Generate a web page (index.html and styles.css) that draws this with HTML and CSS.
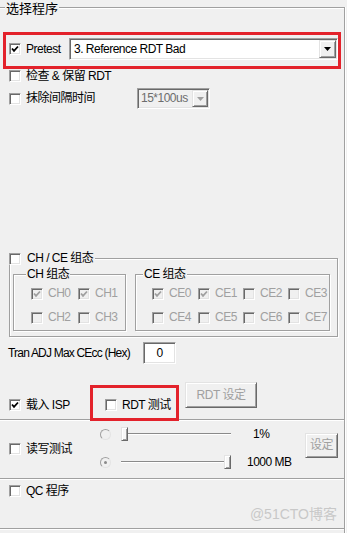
FILE: index.html
```html
<!DOCTYPE html>
<html lang="zh-CN">
<head>
<meta charset="utf-8">
<title>选择程序</title>
<link rel="stylesheet" href="styles.css">
</head>
<body>
<div class="page">
  <div class="frame">
    <div class="legend">选择程序</div>

    <div class="row row-pretest">
      <div class="chk w-pretest"><span class="box"><svg class="tick" viewBox="0 0 8 8"><polyline points="1,3.5 3,5.8 7,1.5"/></svg></span><span>Pretest</span></div>
      <div class="combo combo-main"><span class="combo-text">3. Reference RDT Bad</span><span class="combo-btn raised"><svg class="arrow" viewBox="0 0 7 4"><polygon points="0,0 7,0 3.5,4"/></svg></span></div>
    </div>

    <div class="row row-check">
      <div class="chk"><span class="box"></span><span>检查 &amp; 保留 RDT</span></div>
    </div>

    <div class="row row-erase">
      <div class="chk w-erase"><span class="box"></span><span>抹除间隔时间</span></div>
      <div class="combo combo-dis"><span class="combo-text">15*100us</span><span class="combo-btn raised"><svg class="arrow dis" viewBox="0 0 7 4"><polygon points="0,0 7,0 3.5,4"/></svg></span></div>
    </div>

    <div class="chce etched">
      <div class="chce-legend"><span class="box"></span><span>CH / CE 组态</span></div>
      <div class="chce-groups">
        <div class="sub sub-ch etched">
          <div class="sub-legend leg-ch">CH 组态</div>
          <div class="grid grid-ch">
            <div class="chk off"><span class="box dis"><svg class="tick" viewBox="0 0 8 8"><polyline points="1,3.5 3,5.8 7,1.5"/></svg></span><span>CH0</span></div>
            <div class="chk off"><span class="box dis"><svg class="tick" viewBox="0 0 8 8"><polyline points="1,3.5 3,5.8 7,1.5"/></svg></span><span>CH1</span></div>
            <div class="chk off"><span class="box dis"></span><span>CH2</span></div>
            <div class="chk off"><span class="box dis"></span><span>CH3</span></div>
          </div>
        </div>
        <div class="sub sub-ce etched">
          <div class="sub-legend leg-ce">CE 组态</div>
          <div class="grid grid-ce">
            <div class="chk off"><span class="box dis"><svg class="tick" viewBox="0 0 8 8"><polyline points="1,3.5 3,5.8 7,1.5"/></svg></span><span>CE0</span></div>
            <div class="chk off"><span class="box dis"><svg class="tick" viewBox="0 0 8 8"><polyline points="1,3.5 3,5.8 7,1.5"/></svg></span><span>CE1</span></div>
            <div class="chk off"><span class="box dis"></span><span>CE2</span></div>
            <div class="chk off"><span class="box dis"></span><span>CE3</span></div>
            <div class="chk off"><span class="box dis"></span><span>CE4</span></div>
            <div class="chk off"><span class="box dis"></span><span>CE5</span></div>
            <div class="chk off"><span class="box dis"></span><span>CE6</span></div>
            <div class="chk off"><span class="box dis"></span><span>CE7</span></div>
          </div>
        </div>
      </div>
    </div>

    <div class="row row-tran">
      <span class="tran-label">Tran ADJ Max CEcc (Hex)</span>
      <div class="edit">0</div>
    </div>

    <div class="row row-isp">
      <div class="chk w-isp"><span class="box"><svg class="tick" viewBox="0 0 8 8"><polyline points="1,3.5 3,5.8 7,1.5"/></svg></span><span>载入 ISP</span></div>
      <div class="chk w-rdt"><span class="box"></span><span>RDT 测试</span></div>
      <div class="btn raised btn-rdt">RDT 设定</div>
    </div>

    <div class="section rw">
      <div class="chk rw-left"><span class="box"></span><span>读写测试</span></div>
      <div class="rw-mid">
        <div class="rw-row">
          <span class="radio"></span>
          <div class="slider"><span class="thumb raised"></span><span class="track"></span></div>
          <span class="val val-1">1%</span>
        </div>
        <div class="rw-row">
          <span class="radio"><span class="dot"></span></span>
          <div class="slider"><span class="track"></span><span class="thumb raised"></span></div>
          <span class="val val-2">1000 MB</span>
        </div>
      </div>
      <div class="btn raised btn-set">设定</div>
    </div>

    <div class="section qc">
      <div class="chk qc-row"><span class="box"></span><span>QC 程序</span></div>
      <div class="watermark">@51CTO博客</div>
    </div>

    <div class="section end"></div>
  </div>

  <div class="hl hl-1"></div>
  <div class="hl hl-2"></div>
</div>
</body>
</html>
```

FILE: styles.css
```css
* { box-sizing: border-box; margin: 0; padding: 0; }

html, body {
  width: 347px;
  height: 533px;
  overflow: hidden;
  background: #f0f0f0;
}

body {
  font-family: "Liberation Sans", "Noto Sans CJK SC", sans-serif;
  font-size: 12px;
  line-height: 13px;
  letter-spacing: -0.5px;
  color: #000;
}

.page {
  position: relative;
  width: 347px;
  height: 533px;
  overflow: hidden;
}

.frame {
  margin-top: 7px;
  width: 345px;
  height: 526px;
  border-top: 1px solid #a0a0a0;
  border-right: 1px solid #a0a0a0;
  box-shadow: inset 0 1px #fff, 1px 0 #fff;
}

.legend {
  margin: -8px 0 0 5px;
  width: max-content;
  padding: 1px 1px 0;
  height: 15px;
  line-height: 14px;
  font-size: 13px;
  letter-spacing: 0;
  font-family: "Noto Sans CJK SC", sans-serif;
  background: #f0f0f0;
}

.row { display: flex; align-items: center; }

.chk {
  display: flex;
  align-items: center;
  gap: 5px;
  height: 12px;
  white-space: nowrap;
}

.box {
  width: 12px;
  height: 12px;
  flex: none;
  display: flex;
  align-items: center;
  justify-content: center;
  background: #fff;
  border: 1px solid;
  border-color: #a0a0a0 #fff #fff #a0a0a0;
  box-shadow: inset 1px 1px #696969, inset -1px -1px #e3e3e3;
}

.box.dis {
  background: #f0f0f0;
}

.tick {
  width: 8px;
  height: 8px;
  fill: none;
  stroke: #000;
  stroke-width: 1.8;
}

.box.dis .tick { stroke: #a0a0a0; }

.off { color: #a0a0a0; }

.raised {
  background: #f0f0f0;
  border: 1px solid;
  border-color: #e3e3e3 #696969 #696969 #e3e3e3;
  box-shadow: inset 1px 1px #fff, inset -1px -1px #a0a0a0;
}

.etched {
  border: 1px solid #a0a0a0;
  box-shadow: inset 1px 1px #fff, 1px 1px #fff;
}

/* Pretest row */
.row-pretest { margin-top: 23px; height: 22px; padding-left: 9px; }
.w-pretest { width: 60px; }

.combo {
  display: flex;
  align-items: center;
  height: 22px;
  background: #fff;
  border: 1px solid;
  border-color: #a0a0a0 #fff #fff #a0a0a0;
  box-shadow: inset 1px 1px #696969, inset -1px -1px #e3e3e3;
  padding: 1px 1px 1px 4px;
  white-space: nowrap;
}

.combo-main { width: 269px; }
.combo-text { flex: 1; overflow: hidden; }

.combo-btn {
  width: 17px;
  height: 18px;
  flex: none;
  display: flex;
  align-items: center;
  justify-content: center;
}

.arrow { width: 7px; height: 4px; fill: #000; }
.arrow.dis { fill: #a0a0a0; }

.row-check { margin-top: 9px; height: 14px; padding-left: 9px; }

.row-erase { margin-top: 5px; height: 21px; padding-left: 9px; }
.w-erase { width: 128px; }

.combo-dis {
  width: 73px;
  height: 21px;
  background: #f0f0f0;
  color: #6d6d6d;
  padding-left: 3px;
}

.combo-dis .combo-btn { height: 17px; width: 16px; }

/* CH / CE */
.chce {
  margin: 149px 0 0 9px;
  width: 329px;
  padding: 0 7px 5px 3px;
}

.chce-legend {
  display: flex;
  align-items: center;
  gap: 6px;
  height: 13px;
  margin: -7px 0 0 -4px;
  width: max-content;
  padding-right: 2px;
  background: #f0f0f0;
}

.chce-groups {
  display: flex;
  gap: 9px;
  margin-top: 9px;
}

.sub { padding-bottom: 6px; }
.sub-ch { width: 113px; }
.sub-ce { width: 195px; }

.sub-legend {
  margin-top: -7px;
  height: 13px;
  width: max-content;
  padding: 0 1px;
  background: #f0f0f0;
}

.leg-ch { margin-left: 12px; }
.leg-ce { margin-left: 7px; }

.grid {
  display: grid;
  grid-auto-rows: 13px;
  row-gap: 11px;
  margin-top: 6px;
}

.grid .chk { height: 13px; }

.grid-ch { margin-left: 17px; grid-template-columns: 47px 47px; }
.grid-ce { margin-left: 16px; grid-template-columns: 46px 45px 45px 45px; }

/* Tran row */
.row-tran { margin-top: 5px; height: 22px; padding-left: 8px; }
.tran-label { width: 135px; white-space: nowrap; letter-spacing: -0.8px; }

.edit {
  width: 33px;
  height: 22px;
  line-height: 20px;
  text-align: center;
  background: #fff;
  border: 1px solid;
  border-color: #a0a0a0 #fff #fff #a0a0a0;
  box-shadow: inset 1px 1px #696969, inset -1px -1px #e3e3e3;
}

/* ISP row */
.row-isp {
  margin-top: 18px;
  height: 29px;
  align-items: flex-start;
  padding-left: 9px;
}

.w-isp { width: 96px; margin-top: 17px; }
.w-rdt { width: 80px; margin-top: 17px; }

.btn {
  display: flex;
  align-items: center;
  justify-content: center;
  color: #a0a0a0;
  white-space: nowrap;
}

.btn-rdt { width: 72px; height: 26px; }

/* sections */
.section {
  border-top: 1px solid #a0a0a0;
  box-shadow: inset 0 1px #fff;
}

.rw {
  margin-top: 8px;
  height: 59px;
  display: flex;
  align-items: flex-start;
}

.rw-left { margin: 23px 0 0 9px; width: 91px; }

.rw-mid {
  margin-top: 7px;
  display: flex;
  flex-direction: column;
  gap: 14px;
}

.rw-row {
  display: flex;
  align-items: center;
  height: 14px;
  white-space: nowrap;
}

.radio {
  width: 11px;
  height: 11px;
  flex: none;
  border-radius: 50%;
  border: 1px solid;
  border-color: #a0a0a0 #e3e3e3 #e3e3e3 #a0a0a0;
  background: #f0f0f0;
  display: flex;
  align-items: center;
  justify-content: center;
}

.dot {
  width: 3px;
  height: 3px;
  border-radius: 50%;
  background: #8a8a8a;
}

.slider {
  margin-left: 10px;
  width: 110px;
  height: 14px;
  display: flex;
  align-items: center;
}

.track {
  flex: 1;
  height: 2px;
  border-top: 1px solid #8a8a8a;
  border-bottom: 1px solid #fff;
}

.thumb {
  width: 7px;
  height: 14px;
  flex: none;
  background: #f7f7f7;
}

.val-1 { margin-left: 22px; }
.val-2 { margin-left: 16px; }

.btn-set {
  margin: 13px 6px 0 auto;
  width: 33px;
  height: 25px;
}

.qc {
  height: 50px;
  padding-left: 9px;
  display: flex;
  flex-direction: column;
}

.qc-row { margin-top: 6px; }

.watermark {
  margin: 9px 7px 0 0;
  align-self: flex-end;
  font-family: "Liberation Sans", "Noto Sans CJK SC", sans-serif;
  font-size: 14px;
  line-height: 16px;
  letter-spacing: 0;
  color: #c8c8c8;
}

.end { height: 5px; }

/* red annotation boxes */
.hl {
  position: absolute;
  border: 3px solid #e3222b;
}

.hl-1 { left: 3px; top: 32px; width: 338px; height: 37px; }
.hl-2 { left: 90px; top: 385px; width: 89px; height: 36px; }
```
